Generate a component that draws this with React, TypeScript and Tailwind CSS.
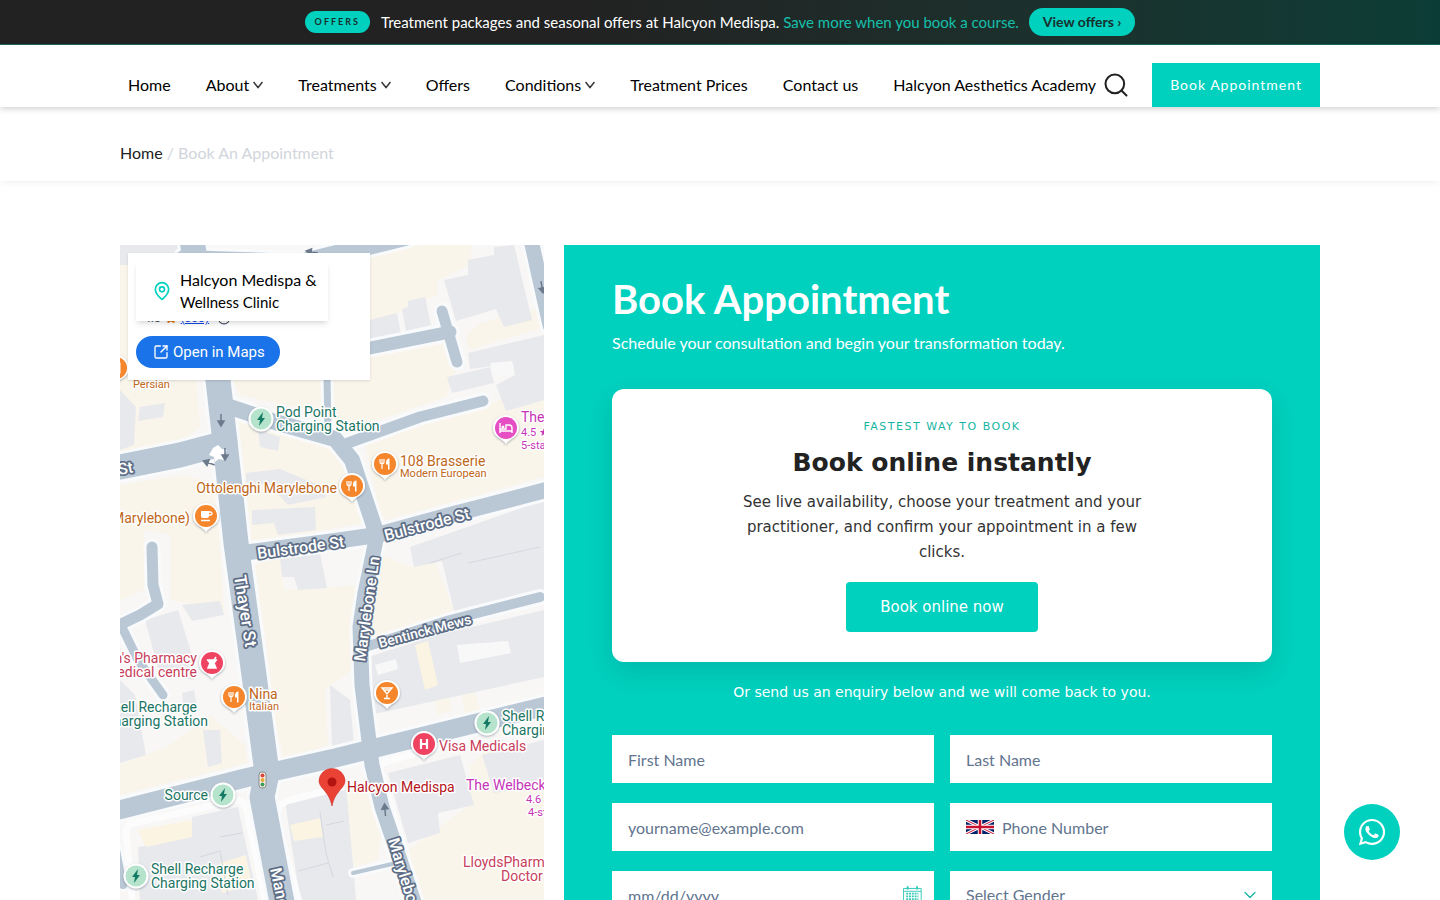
import type { ReactNode } from "react";
import { ChevronDown, Info, MapPin, Search, SquareArrowOutUpRight, Star } from "lucide-react";
import { FaWhatsapp } from "react-icons/fa";

const NAV = [
  { label: "Home" },
  { label: "About", menu: true },
  { label: "Treatments", menu: true },
  { label: "Offers" },
  { label: "Conditions", menu: true },
  { label: "Treatment Prices" },
  { label: "Contact us" },
  { label: "Halcyon Aesthetics Academy" },
];

const CREAM = [
  "0,10 60,10 60,60 75,120 80,182 50,205 0,215",
  "112,135 200,135 204,170 120,150",
  "222,20 300,0 352,0 350,20 318,35 318,50 250,80 250,30",
  "250,112 326,98 336,125 326,152 250,178 214,185 212,135",
  "360,78 424,62 424,82 350,105 345,92",
  "118,172 220,200 244,278 132,298",
  "245,200 424,140 424,232 262,276",
  "0,240 62,230 95,238 100,300 104,365 50,355 50,290 24,285 24,345 0,355",
  "135,320 160,312 164,345 240,340 232,370 234,425 210,440 158,500 150,430",
  "262,310 290,322 315,316 335,370 250,392",
  "295,398 312,392 325,440 304,446",
  "0,520 50,500 90,470 125,500 128,518 0,550",
  "155,440 205,440 208,500 163,518",
  "222,545 246,535 262,575 258,615 234,622",
  "284,608 350,560 350,520 372,500 424,500 424,720 320,720 284,620",
  "340,440 352,440 362,470 346,474",
  "310,435 325,435 332,465 318,470",
];

const BUILDINGS = [
  "324,35 348,30 348,15 374,10 374,2 394,0 412,75 384,82 376,64 336,76",
  "282,64 288,62 288,56 305,52 311,80 286,86",
  "250,75 277,68 281,89 250,95",
  "348,108 424,90 424,155 386,166 376,140 395,130 393,118 350,124",
  "327,132 370,122 374,138 332,148",
  "0,145 16,162 14,200 0,205",
  "20,162 45,158 43,172 18,176",
  "0,0 64,0 64,20 0,20",
  "126,228 160,224 184,234 205,242 206,252 168,260 150,240 126,238",
  "132,265 195,262 196,285 158,290 154,278 132,280",
  "160,312 200,308 207,343 178,345 174,332 162,332",
  "290,302 424,255 424,345 334,366 322,316 294,322",
  "248,412 318,390 424,365 424,432 250,470",
  "138,185 160,192 158,206 140,202",
  "25,375 58,365 72,410 74,435 40,430",
  "62,360 100,356 104,370 72,376",
  "0,435 15,450 26,510 0,518",
  "83,485 100,485 102,518 88,522",
  "62,448 74,445 77,462 64,465",
  "18,602 72,592 72,572 118,562 124,590 138,655 142,720 40,720 20,660",
  "165,556 226,540 236,655 240,720 190,720",
  "210,440 230,455 234,500 212,505",
  "268,528 340,510 354,560 318,568 320,588 288,598",
  "362,510 424,495 424,540 374,548",
];

const CREAM_TOP = [
  "170,580 200,573 203,592 174,596",
  "18,585 72,575 72,592 26,602",
  "100,618 126,610 132,640 102,648",
  "295,400 308,396 318,440 305,445",
];

const YARDS = ["337,400 388,396 391,408 340,418", "370,118 392,116 394,128 376,132", "255,420 276,414 278,424 258,430"];

const LOTS = ["100,592 122,588", "80,612 100,606 108,650", "200,567 206,608 213,632", "206,580 224,576", "178,626 208,618", "310,318 342,308", "348,318 420,302"];

const ROADS: { points: string; width: number }[] = [
  { points: "64,14 180,18 285,-8", width: 18 },
  { points: "72,-5 84,70 98,135 107,215 116,298 134,430 147,528 142,552 161,652 176,725", width: 25 },
  { points: "-5,223 60,210 105,198", width: 25 },
  { points: "104,160 155,177 215,194 232,215 257,290", width: 16 },
  { points: "207,130 208,188", width: 7 },
  { points: "228,198 300,172 363,156", width: 11 },
  { points: "322,66 337,117", width: 11 },
  { points: "245,104 330,87", width: 13 },
  { points: "411,-5 430,80", width: 15 },
  { points: "122,308 215,296 257,290 330,270 430,244", width: 16 },
  { points: "257,290 245,348 240,382 242,440 252,520 262,562 275,600 295,660 312,725", width: 15 },
  { points: "245,402 330,375 420,352", width: 10 },
  { points: "-5,566 125,533 215,513 430,460", width: 19 },
  { points: "32,302 33,340 38,359 20,370 -5,382", width: 11 },
  { points: "0,378 18,415 43,450", width: 9 },
  { points: "233,628 272,619", width: 4 },
  { points: "-4,605 3,640", width: 8 },
];

function Pin({ x, y, color, children }: { x: number; y: number; color: string; children: ReactNode }) {
  return (
    <g transform={`translate(${x} ${y})`}>
      <path
        d="M0-13a13 13 0 0 1 13 13c0 5-3 8-6 10-3 2-5 3-7 6-2-3-4-4-7-6-3-2-6-5-6-10A13 13 0 0 1 0-13z"
        fill="#fff"
        filter="url(#pin-shadow)"
      />
      <circle r="11" fill={color} />
      {children}
    </g>
  );
}

function FoodPin({ x, y }: { x: number; y: number }) {
  return (
    <Pin x={x} y={y} color="#f5862b">
      <path d="M-5-5v3a2 2 0 0 0 4 0v-3M-3-5v10" fill="none" stroke="#fff" strokeWidth="1.2" />
      <path d="M4.500 5.500V-5.500c-2.500 0-3.500 2-3.500 4v2h2v5z" fill="#fff" />
    </Pin>
  );
}

function ChargePin({ x, y }: { x: number; y: number }) {
  return (
    <g transform={`translate(${x} ${y})`}>
      <circle r="12.500" fill="#fff" filter="url(#pin-shadow)" />
      <circle r="10.500" fill="#b5e3cc" />
      <path d="M2-7-4 1h3l-1 6 6-8H1z" fill="#147a64" />
    </g>
  );
}

function Place({ x, y, color, size = 14, end, children }: { x: number; y: number; color: string; size?: number; end?: boolean; children: string }) {
  return (
    <text x={x} y={y} fill={color} fontSize={size} textAnchor={end ? "end" : "start"} stroke="#fff" strokeWidth="3" strokeLinejoin="round" paintOrder="stroke">
      {children}
    </text>
  );
}

function Street({ x, y, angle, size = 16, children }: { x: number; y: number; angle: number; size?: number; children: string }) {
  return (
    <text
      transform={`translate(${x} ${y}) rotate(${angle})`}
      fill="#fff"
      fontSize={size}
      fontWeight="500"
      stroke="#5d6d85"
      strokeWidth="3.500"
      strokeLinejoin="round"
      paintOrder="stroke"
    >
      {children}
    </text>
  );
}

function Arrow({ x, y, angle }: { x: number; y: number; angle: number }) {
  return (
    <path d="M0 6V-2M-3-1 0-6 3-1z" transform={`translate(${x} ${y}) rotate(${angle})`} fill="#6c7a8c" stroke="#6c7a8c" strokeWidth="1.500" />
  );
}

function StreetMap() {
  const green = "#1b7564";
  const orange = "#c0671a";
  const red = "#c8405a";
  const pink = "#c535b8";
  return (
    <svg className="absolute inset-0 h-full w-full font-['Roboto',sans-serif]" role="img">
      <defs>
        <filter id="pin-shadow" x="-50%" y="-50%" width="200%" height="200%">
          <feDropShadow dx="0" dy="1" stdDeviation="1" floodColor="#475569" floodOpacity="0.5" />
        </filter>
      </defs>
      <rect width="100%" height="100%" fill="#f8f7f6" />
      {CREAM.map((p) => (
        <polygon key={p} points={p} fill="#faf5ea" />
      ))}
      {BUILDINGS.map((p) => (
        <polygon key={p} points={p} fill="#e8e9ed" />
      ))}
      {CREAM_TOP.map((p) => (
        <polygon key={p} points={p} fill="#fbf4e2" />
      ))}
      {YARDS.map((p) => (
        <polygon key={p} points={p} fill="#f8f8f8" />
      ))}
      {LOTS.map((p) => (
        <polyline key={p} points={p} fill="none" stroke="#d5d8de" />
      ))}
      <path
        d="M18 720 6 585c0-4 3-6 8-7l98-22c10-2 13 2 15 10l20 100 8 54M196 720l-38-140c-3-14 0-21 12-25l55-14M300 655l-40-130c0-5 2-7 8-9l80-22"
        fill="none"
        stroke="#fcfcfd"
        strokeWidth="7"
      />
      {ROADS.map((r) => (
        <polyline key={r.points} points={r.points} fill="none" stroke="#f9fafb" strokeWidth={r.width + 6} strokeLinecap="round" strokeLinejoin="round" />
      ))}
      {ROADS.map((r) => (
        <polyline key={r.points} points={r.points} fill="none" stroke="#bac8d6" strokeWidth={r.width} strokeLinecap="round" strokeLinejoin="round" />
      ))}
      <path d="M93 203l5-3 4 4 5 1-3 4 1 6-6-1-4 3-1-5-5-2z" fill="#fff" />
      <Arrow x={101} y={175} angle={180} />
      <Arrow x={105} y={209} angle={180} />
      <Arrow x={89} y={218} angle={-70} />
      <Arrow x={192} y={7} angle={-80} />
      <Arrow x={422} y={42} angle={170} />
      <Arrow x={265} y={565} angle={-5} />

      <Street x={-1} y={230} angle={-10}>St</Street>
      <Street x={138} y={314} angle={-8}>Bulstrode St</Street>
      <Street x={266} y={296} angle={-15}>Bulstrode St</Street>
      <Street x={114} y={331} angle={81} size={17}>Thayer St</Street>
      <Street x={245} y={417} angle={-82}>Marylebone Ln</Street>
      <Street x={260} y={403} angle={-15} size={14}>Bentinck Mews</Street>
      <Street x={150} y={624} angle={78}>Mandeville Pl</Street>
      <Street x={268} y={595} angle={73}>Marylebone Ln</Street>

      <FoodPin x={-4} y={123} />
      <Place x={13} y={143} color={orange} size={11}>Persian</Place>
      <ChargePin x={141} y={174} />
      <Place x={156} y={172} color={green}>Pod Point</Place>
      <Place x={156} y={186} color={green}>Charging Station</Place>
      <Pin x={386} y={183} color="#e64fc4">
        <path d="M-6-5V5M-6 3H6v2M6 3V0q0-3-3-3H0v4h-6" fill="none" stroke="#fff" strokeWidth="1.400" />
        <circle cx="-3" cy="-1" r="1.500" fill="#fff" />
      </Pin>
      <Place x={401} y={177} color={pink}>The Marylebone</Place>
      <Place x={401} y={191} color={pink} size={11}>4.5 ★</Place>
      <Place x={401} y={204} color={pink} size={11}>5-star hotel</Place>
      <FoodPin x={265} y={219} />
      <Place x={280} y={221} color={orange}>108 Brasserie</Place>
      <Place x={280} y={232} color={orange} size={11}>Modern European</Place>
      <FoodPin x={232} y={241} />
      <Place x={217} y={248} color={orange} end>Ottolenghi Marylebone</Place>
      <Pin x={86} y={271} color="#f5862b">
        <path d="M-5-5H3v5q0 2-2 2h-4q-2 0-2-2z" fill="#fff" />
        <path d="M3-4h1.500q1.500 0 1.500 1.500T4.500-1H3M-5 4.500H4" fill="none" stroke="#fff" strokeWidth="1.300" />
      </Pin>
      <Place x={70} y={278} color={orange} end>(Marylebone)</Place>
      <Pin x={92} y={418} color="#ef4461">
        <path d="M-5-3H5M-4-2.500 -2 0-4 5H4L2 0 4-2.500zM2-3l2-3" fill="#fff" stroke="#fff" strokeWidth="1.500" />
      </Pin>
      <Place x={77} y={418} color={red} end>John's Pharmacy</Place>
      <Place x={77} y={432} color={red} end>&amp; medical centre</Place>
      <FoodPin x={114} y={452} />
      <Place x={129} y={454} color={orange}>Nina</Place>
      <Place x={129} y={465} color={orange} size={11}>Italian</Place>
      <Pin x={267} y={448} color="#f5862b">
        <path d="M-5-5H5L0 1zM0 0v5M-3 5.500H3M-3-3H3" fill="none" stroke="#fff" strokeWidth="1.400" />
      </Pin>
      <Place x={77} y={467} color={green} end>Shell Recharge</Place>
      <Place x={88} y={481} color={green} end>Charging Station</Place>
      <ChargePin x={367} y={478} />
      <Place x={382} y={476} color={green}>Shell Recharge</Place>
      <Place x={382} y={490} color={green}>Charging Station</Place>
      <Pin x={304} y={499} color="#ef4461">
        <path d="M-3-5V5M3-5V5M-3 0H3" fill="none" stroke="#fff" strokeWidth="2.200" />
      </Pin>
      <Place x={319} y={506} color={red}>Visa Medicals</Place>
      <ChargePin x={103} y={550} />
      <Place x={88} y={555} color={green} end>Source</Place>
      <ChargePin x={16} y={631} />
      <Place x={31} y={629} color={green}>Shell Recharge</Place>
      <Place x={31} y={643} color={green}>Charging Station</Place>
      <Place x={346} y={545} color={pink}>The Welbeck</Place>
      <Place x={406} y={558} color={pink} size={11}>4.6 ★</Place>
      <Place x={408} y={571} color={pink} size={11}>4-star hotel</Place>
      <Place x={343} y={622} color={red}>LloydsPharmacy</Place>
      <Place x={381} y={636} color={red}>Doctor</Place>

      <rect x="139" y="527" width="7" height="16" rx="3" fill="#f4f1e4" stroke="#777" strokeWidth="0.800" />
      <circle cx="142.500" cy="530.500" r="2" fill="#d9453d" />
      <circle cx="142.500" cy="535" r="2" fill="#e8a93a" />
      <circle cx="142.500" cy="539.500" r="2" fill="#3f9a5f" />

      <path d="M212 561c-2-9-5-12-8-16-3-3-5-6-5-9a13 12.500 0 0 1 26 0c0 3-2 6-5 9-3 4-6 7-8 16z" fill="#ea4335" stroke="#c5221f" strokeWidth="0.500" />
      <circle cx="212" cy="537" r="4.500" fill="#b31412" />
      <Place x={227} y={547} color="#b3141b">Halcyon Medispa</Place>
    </svg>
  );
}

function MapPanel() {
  return (
    <section className="relative min-h-[480px] overflow-hidden">
      <StreetMap />
      <div className="relative m-2 flex h-[127px] w-[242px] flex-col justify-end gap-2.5 bg-white px-2 pb-3 shadow font-['Roboto',sans-serif]">
        <div className="flex items-center gap-1 pl-2 text-xs text-gray-600">
          <span>4.8</span>
          <Star className="size-3 fill-amber-600 text-amber-600" />
          <a href="#reviews" className="text-blue-700 underline">(333)</a>
          <Info className="ml-1 size-3.5" />
        </div>
        <div className="absolute top-2 left-2 flex h-[60px] w-48 items-center gap-2 bg-white pl-4 shadow-md font-['Lato',sans-serif] text-black">
          <MapPin className="size-5 text-[#00d1bf]" />
          <div>
            <p className="text-base leading-[22px]">Halcyon Medispa &amp;</p>
            <p className="text-[15px] leading-[22px]">Wellness Clinic</p>
          </div>
        </div>
        <a href="#map" className="flex h-8 w-36 items-center gap-1 rounded-full bg-[#1a73e8] pl-[17px] text-[15px] text-white">
          <SquareArrowOutUpRight className="size-4" />
          Open in Maps
        </a>
      </div>
    </section>
  );
}

function MenuCaret() {
  return (
    <svg viewBox="0 0 10 8" className="h-2 w-2.5" fill="none" stroke="#333" strokeWidth="1.5" aria-hidden="true">
      <path d="M.5 1 5 6.500 9.500 1" />
    </svg>
  );
}

function UkFlag() {
  return (
    <svg viewBox="0 0 28 14" className="h-[14px] w-7" aria-hidden="true">
      <rect width="28" height="14" fill="#012169" />
      <path d="M0 0 28 14M28 0 0 14" stroke="#fff" strokeWidth="3" />
      <path d="M0 0 28 14M28 0 0 14" stroke="#c8102e" strokeWidth="1" />
      <path d="M14 0v14M0 7h28" stroke="#fff" strokeWidth="4.500" />
      <path d="M14 0v14M0 7h28" stroke="#c8102e" strokeWidth="2.500" />
    </svg>
  );
}

function CalendarIcon() {
  return (
    <svg viewBox="0 0 20 20" className="size-5 text-[#2fc9b5]" fill="none" stroke="currentColor" aria-hidden="true">
      <path d="M.5 3h19v16.500H.5zM.5 6h19" />
      <path d="M3.500 8.500h13M3.500 11.500h13M3.500 14.500h13M3.500 17h13" strokeWidth="2" strokeDasharray="2 1" />
      <path d="M5 .5v3.500M15 .5v3.500" strokeWidth="2" />
    </svg>
  );
}

const field = "h-12 w-full bg-white px-4 text-base text-slate-500 placeholder:text-slate-500 outline-none";

function BookingPanel() {
  return (
    <section className="bg-[#00d1bf] px-12 pt-[30px] pb-12">
      <h1 className="text-[40px] leading-[48px] font-bold text-white">Book Appointment</h1>
      <p className="mt-2 text-base leading-6 text-white">Schedule your consultation and begin your transformation today.</p>

      <div className="mt-[34px] flex flex-col items-center rounded-xl bg-white px-8 pt-[31px] pb-[30px] text-center font-['DejaVu_Sans',sans-serif] shadow-[0_10px_30px_rgba(0,0,0,0.12)]">
        <p className="text-[11px] leading-[14px] tracking-[1.5px] text-[#16b5a3]">FASTEST WAY TO BOOK</p>
        <h2 className="mt-[11px] text-[25px] leading-9 font-bold text-[#222]">Book online instantly</h2>
        <p className="mt-[9px] max-w-[420px] text-[15px] leading-[25px] text-[#333]">
          See live availability, choose your treatment and your practitioner, and confirm your appointment in a few clicks.
        </p>
        <a href="#book" className="mt-[17px] rounded bg-[#00d1bf] px-[34px] text-[15px] leading-[50px] text-white">
          Book online now
        </a>
      </div>

      <p className="mt-5 text-center font-['DejaVu_Sans',sans-serif] text-sm text-white">
        Or send us an enquiry below and we will come back to you.
      </p>

      <form className="mt-[33px] grid grid-cols-2 gap-x-4 gap-y-5">
        <input className={field} placeholder="First Name" aria-label="First Name" />
        <input className={field} placeholder="Last Name" aria-label="Last Name" />
        <input type="email" className={field} placeholder="yourname@example.com" aria-label="yourname@example.com" />
        <div className="flex items-center bg-white pl-4">
          <UkFlag />
          <input type="tel" className="h-12 min-w-0 flex-1 px-2 text-base text-slate-500 outline-none placeholder:text-slate-500" placeholder="Phone Number" aria-label="Phone Number" />
        </div>
        <div className="flex items-center bg-white pr-3">
          <input className={field} placeholder="mm/dd/yyyy" aria-label="mm/dd/yyyy" />
          <CalendarIcon />
        </div>
        <div className="grid items-center">
          <select className={`${field} col-start-1 row-start-1 appearance-none`} aria-label="Select Gender">
            <option>Select Gender</option>
          </select>
          <ChevronDown className="pointer-events-none col-start-1 row-start-1 mr-3 size-5 justify-self-end text-[#16b5a3]" strokeWidth={1.5} />
        </div>
      </form>
    </section>
  );
}

export default function App() {
  return (
    <div className="bg-white font-['Lato',sans-serif]">
      <div className="flex min-h-[45px] items-center justify-center border-b border-[#1b6a5a] bg-linear-to-r from-[#222] from-40% to-[#0b3d36] text-[15px] text-white">
        <span className="mr-[11px] rounded-full bg-[#00d1bf] px-2.5 text-[9px] leading-[22px] font-bold tracking-[2px] text-[#16302d]">OFFERS</span>
        <p>
          Treatment packages and seasonal offers at Halcyon Medispa. <span className="text-[#16c0ac]">Save more when you book a course.</span>
        </p>
        <a href="#offers" className="ml-2.5 rounded-full bg-[#00d1bf] px-3.5 text-sm leading-7 font-bold text-[#16302d]">
          View offers ›
        </a>
      </div>

      <header className="relative bg-white pt-[18px] shadow-[0_2px_6px_rgba(0,0,0,0.18)]">
        <div className="mx-auto flex max-w-[1200px] items-center">
          <nav className="flex flex-1 items-center justify-between pl-2 text-base whitespace-nowrap text-black">
            {NAV.map((item) => (
              <a key={item.label} href="#" className="flex items-center gap-1">
                {item.label}
                {item.menu && <MenuCaret />}
              </a>
            ))}
          </nav>
          <button className="ml-1.5 text-[#222]" aria-label="Search">
            <Search className="size-7" strokeWidth={1.75} />
          </button>
          <a href="#book" className="ml-[22px] bg-[#00d1bf] px-[18px] text-sm leading-[44px] tracking-[1px] text-white">
            Book Appointment
          </a>
        </div>
      </header>

      <div className="shadow-[0_4px_6px_-2px_rgba(0,0,0,0.06)]">
        <p className="mx-auto max-w-[1200px] pt-[34px] pb-4 text-base leading-6 text-gray-300">
          <a href="#" className="text-[#222]">Home</a> / Book An Appointment
        </p>
      </div>

      <main className="mx-auto mt-16 grid max-w-[1200px] grid-cols-[424fr_756fr] gap-5">
        <MapPanel />
        <BookingPanel />
      </main>

      <a href="#whatsapp" aria-label="WhatsApp" className="fixed right-10 bottom-10 flex size-14 items-center justify-center rounded-full bg-[#00d1bf] text-white">
        <FaWhatsapp className="size-[30px]" />
      </a>
    </div>
  );
}
